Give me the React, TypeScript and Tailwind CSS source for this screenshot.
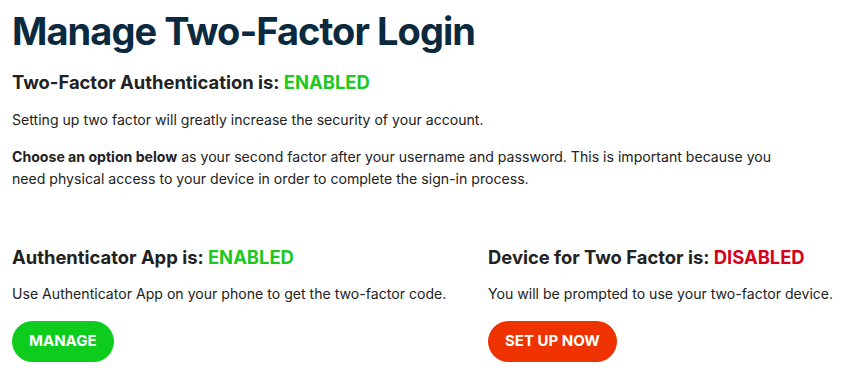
export default function App() {
  return (
    <div className="bg-white w-[847px] h-[382px] px-3 pt-[9px] text-[#222] font-['Inter',sans-serif]">
      <h1 className="text-[38px] leading-[44px] font-bold text-[#0b2a40] tracking-tight">Manage Two-Factor Login</h1>
      <h2 className="mt-[17px] text-[18.4px] leading-[24px] font-bold">
        Two-Factor Authentication is: <span className="text-[#1ec81e]">ENABLED</span>
      </h2>
      <p className="mt-[15px] text-[14.1px] leading-[22px]">Setting up two factor will greatly increase the security of your account.</p>
      <p className="mt-[15px] text-[14.1px] leading-[22px] max-w-[780px]">
        <strong className="font-bold">Choose an option below</strong> as your second factor after your username and password. This is important because you need physical access to your device in order to complete the sign-in process.
      </p>
      <div className="mt-[55px] grid grid-cols-[476px_1fr]">
        <div>
          <h3 className="text-[18.4px] leading-[24px] font-bold">
            Authenticator App is: <span className="text-[#1ec81e]">ENABLED</span>
          </h3>
          <p className="mt-[14px] text-[14.1px] leading-[22px]">Use Authenticator App on your phone to get the two-factor code.</p>
          <button className="mt-[16px] h-[41px] px-[17px] rounded-full bg-[#0dcc1e] text-white font-bold text-[15px]">MANAGE</button>
        </div>
        <div>
          <h3 className="text-[18.4px] leading-[24px] font-bold">
            Device for Two Factor is: <span className="text-[#d9001b]">DISABLED</span>
          </h3>
          <p className="mt-[14px] text-[14.1px] leading-[22px]">You will be prompted to use your two-factor device.</p>
          <button className="mt-[16px] h-[41px] px-[17px] rounded-full bg-[#ee3300] text-white font-bold text-[15px]">SET UP NOW</button>
        </div>
      </div>
    </div>
  )
}
